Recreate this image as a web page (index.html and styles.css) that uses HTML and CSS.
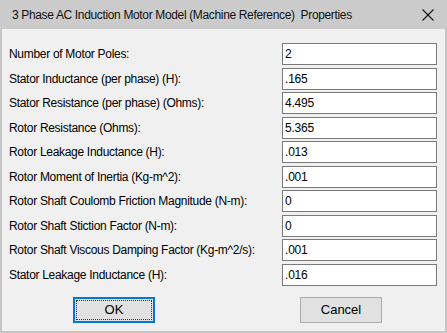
FILE: index.html
```html
<!DOCTYPE html>
<html lang="en">
<head>
  <meta charset="UTF-8" />
  <title>Properties</title>
  <link rel="stylesheet" href="styles.css">
</head>
<body>
<div class="window">
  <div class="titlebar">
    <span class="title">3 Phase AC Induction Motor Model (Machine Reference)&nbsp; Properties</span>
    <span class="close">
      <svg width="12" height="12" viewBox="0 0 12 12"><path d="M0.5 0.5 L11.5 11.5 M11.5 0.5 L0.5 11.5" stroke="#111" stroke-width="1.1" fill="none"/></svg>
    </span>
  </div>
  <div class="content">
    <div class="fields">
      <label>Number of Motor Poles:</label><input type="text" value="2">
      <label>Stator Inductance (per phase) (H):</label><input type="text" value=".165">
      <label>Stator Resistance (per phase) (Ohms):</label><input type="text" value="4.495">
      <label>Rotor Resistance (Ohms):</label><input type="text" value="5.365">
      <label>Rotor Leakage Inductance (H):</label><input type="text" value=".013">
      <label>Rotor Moment of Inertia (Kg-m^2):</label><input type="text" value=".001">
      <label>Rotor Shaft Coulomb Friction Magnitude (N-m):</label><input type="text" value="0">
      <label>Rotor Shaft Stiction Factor (N-m):</label><input type="text" value="0">
      <label>Rotor Shaft Viscous Damping Factor (Kg-m^2/s):</label><input type="text" value=".001">
      <label>Stator Leakage Inductance (H):</label><input type="text" value=".016">
    </div>
    <div class="buttons">
      <button class="btn default"><span class="focus">OK</span></button>
      <button class="btn">Cancel</button>
    </div>
  </div>
</div>
</body>
</html>
```

FILE: styles.css
```css
* { margin: 0; padding: 0; box-sizing: border-box; }
html, body {
  width: 447px; height: 333px; overflow: hidden;
  background: #f0f0f0;
  font-family: "Liberation Sans", Arial, sans-serif; color: #000;
}
.window {
  width: 447px; height: 333px;
  display: flex; flex-direction: column;
  border: 2px solid #c6c6c6; border-top: none;
  background: #f0f0f0;
}
.titlebar {
  height: 29px; margin: 0 -2px;
  background: #cbcbcb;
  display: flex; align-items: center; justify-content: space-between;
  padding: 0 10px 0 12px;
}
.title {
  font-size: 12px; letter-spacing: -0.35px; color: #111;
}
.close { display: flex; align-items: center; padding-right: 3px; }
.content {
  flex: 1; padding: 14px 7px 0 7px;
  display: flex; flex-direction: column;
}
.fields {
  display: grid;
  grid-template-columns: 273px 155px;
  grid-auto-rows: 22px;
  row-gap: 2.55px;
  align-items: center;
}
.fields label {
  font-size: 12px; letter-spacing: -0.3px;
  white-space: nowrap;
}
.fields input {
  height: 22px; width: 155px;
  border: 1px solid #7a7a7a; background: #fff;
  font-family: "Liberation Sans", Arial, sans-serif;
  font-size: 12px; letter-spacing: -0.2px; color: #000;
  padding: 0 2px; outline: none;
}
.buttons {
  display: flex; margin-top: 11px;
  padding-left: 64px; gap: 145px;
}
.btn {
  width: 82px; height: 26px;
  background: #e1e1e1; border: 1px solid #adadad;
  font-family: "Liberation Sans", Arial, sans-serif;
  font-size: 13px; color: #000;
  display: flex; align-items: center; justify-content: center;
}
.btn.default {
  border: 2px solid #0078d7; padding: 1px;
}
.btn .focus {
  flex: 1; align-self: stretch;
  display: flex; align-items: center; justify-content: center;
  border: 1px dotted #333;
}
```
